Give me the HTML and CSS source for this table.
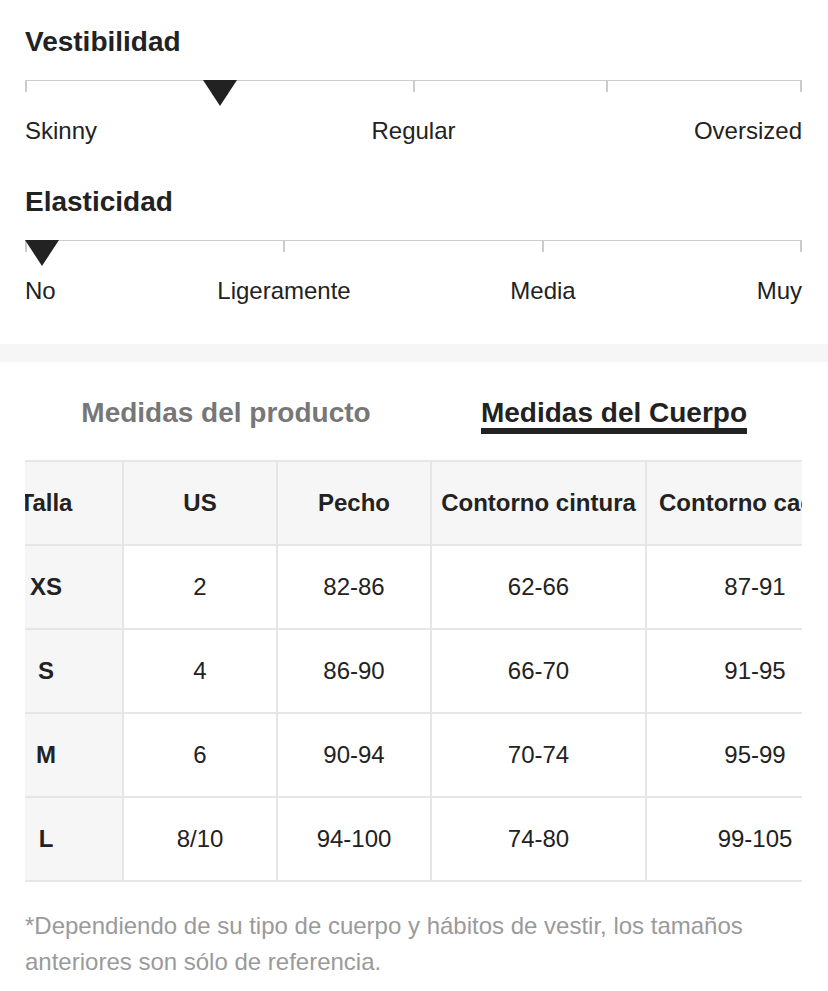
FILE: index.html
```html
<!DOCTYPE html>
<html lang="es">
<head>
<meta charset="utf-8">
<title>Guía de tallas</title>
<link rel="stylesheet" href="styles.css">
</head>
<body>
<section class="fit">
  <h2 class="fit-title">Vestibilidad</h2>
  <div class="track">
    <span class="seg"></span><span class="seg"></span><span class="seg"></span><span class="seg last"></span>
    <span class="marker marker-quarter"></span>
  </div>
  <div class="labels labels-3">
    <span class="lab lab-first">Skinny</span>
    <span class="lab lab-mid">Regular</span>
    <span class="lab lab-last">Oversized</span>
  </div>

  <h2 class="fit-title fit-title-next">Elasticidad</h2>
  <div class="track">
    <span class="seg"></span><span class="seg"></span><span class="seg last"></span>
    <span class="marker marker-start"></span>
  </div>
  <div class="labels labels-4">
    <span class="lab lab-first">No</span>
    <span class="lab lab-mid">Ligeramente</span>
    <span class="lab lab-mid">Media</span>
    <span class="lab lab-last">Muy</span>
  </div>
</section>

<div class="band"></div>

<nav class="tabs">
  <div class="tab"><span class="tab-text">Medidas del producto</span></div>
  <div class="tab tab-active"><span class="tab-text">Medidas del Cuerpo</span></div>
</nav>

<div class="table-scroll">
  <div class="size-table">
    <div class="cell head first">Talla</div>
    <div class="cell head">US</div>
    <div class="cell head">Pecho</div>
    <div class="cell head">Contorno cintura</div>
    <div class="cell head">Contorno cadera</div>

    <div class="cell first">XS</div>
    <div class="cell">2</div>
    <div class="cell">82-86</div>
    <div class="cell">62-66</div>
    <div class="cell">87-91</div>

    <div class="cell first">S</div>
    <div class="cell">4</div>
    <div class="cell">86-90</div>
    <div class="cell">66-70</div>
    <div class="cell">91-95</div>

    <div class="cell first">M</div>
    <div class="cell">6</div>
    <div class="cell">90-94</div>
    <div class="cell">70-74</div>
    <div class="cell">95-99</div>

    <div class="cell first">L</div>
    <div class="cell">8/10</div>
    <div class="cell">94-100</div>
    <div class="cell">74-80</div>
    <div class="cell">99-105</div>
  </div>
</div>

<p class="note">*Dependiendo de su tipo de cuerpo y hábitos de vestir, los tamaños anteriores son sólo de referencia.</p>
</body>
</html>
```
FILE: styles.css
```css
* { box-sizing: border-box; }

html, body {
  margin: 0;
  padding: 0;
  background: #ffffff;
}

body {
  font-family: "Liberation Sans", Arial, Helvetica, sans-serif;
  color: #222222;
  width: 828px;
}

.fit {
  padding: 25px 26px 0 25px;
}

.fit-title {
  margin: 0;
  font-size: 28px;
  line-height: 34px;
  font-weight: 700;
  color: #222222;
}

.fit-title-next {
  margin-top: 38px;
}

.track {
  position: relative;
  display: flex;
  height: 35px;
  margin-top: 21px;
}

.seg {
  flex: 1 1 0;
  height: 12px;
  border-top: 1px solid #cccccc;
  border-left: 2px solid #cccccc;
}

.seg.last {
  border-right: 2px solid #cccccc;
}

.marker {
  position: absolute;
  top: 0;
  width: 0;
  height: 0;
  border-left: 17px solid transparent;
  border-right: 17px solid transparent;
  border-top: 26px solid #222222;
}

.marker-quarter {
  left: calc(25% - 16px);
}

.marker-start {
  left: 0;
}

.labels {
  display: grid;
  font-size: 24px;
  line-height: 32px;
  color: #222222;
  white-space: nowrap;
}

.labels-3 {
  grid-template-columns: repeat(4, 1fr);
}

.labels-4 {
  grid-template-columns: repeat(6, 1fr);
}

.lab-first {
  justify-self: start;
}

.lab-mid {
  grid-column: span 2;
  justify-self: center;
}

.lab-last {
  justify-self: end;
}

.band {
  height: 18px;
  margin-top: 37px;
  background: #f6f6f6;
}

.tabs {
  display: flex;
  padding: 36px 20px 0 32px;
}

.tab {
  flex: 1 1 0;
  text-align: center;
}

.tab-text {
  display: inline-block;
  font-size: 28px;
  line-height: 30px;
  font-weight: 700;
  color: #777777;
  border-bottom: 6px solid transparent;
}

.tab-active .tab-text {
  color: #222222;
  border-bottom-color: #222222;
}

.table-scroll {
  margin: 26px 26px 0 25px;
  overflow: hidden;
}

.size-table {
  display: grid;
  grid-template-columns: 152px 152px 152px 213px 216px;
  grid-auto-rows: 82px;
  gap: 2px;
  width: max-content;
  margin-left: -55px;
  padding: 2px 0;
  background: #e6e6e6;
}

.cell {
  display: flex;
  align-items: center;
  justify-content: center;
  background: #ffffff;
  font-size: 24px;
  color: #222222;
  white-space: nowrap;
}

.cell.head,
.cell.first {
  background: #f6f6f6;
  font-weight: 700;
}

.note {
  margin: 26px 26px 0 25px;
  font-size: 24px;
  line-height: 36px;
  color: #9a9a9a;
}
```
